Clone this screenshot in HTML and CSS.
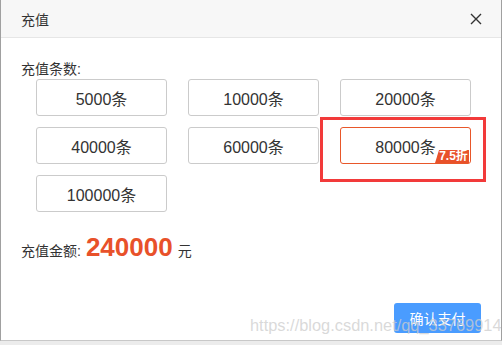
FILE: index.html
```html
<!doctype html>
<html lang="zh-cn">

<head>
    <title>充值</title>
    <meta charset="utf-8" />
    <meta name="viewport" content="width=device-width, initial-scale=1.0" />
    <link rel="stylesheet" href="styles.css">
</head>

<body>
    <div class="dialog">
        <div class="dialog-header">
            <span class="dialog-title">充值</span>
            <svg class="close" width="12" height="12" viewBox="0 0 12 12">
                <path d="M1 1L11 11M11 1L1 11" stroke="#333" stroke-width="1.4" fill="none" />
            </svg>
        </div>

        <div class="dialog-body">
            <div class="label">充值条数:</div>
            <div class="options">
                <div class="option">5000条</div>
                <div class="option">10000条</div>
                <div class="option">20000条</div>
                <div class="option">40000条</div>
                <div class="option">60000条</div>
                <div class="option active">80000条<span class="badge">7.5折</span></div>
                <div class="option">100000条</div>
            </div>

            <div class="amount">
                <span class="amount-label">充值金额:</span>
                <span class="amount-value">240000</span>
                <span class="amount-unit">元</span>
            </div>
        </div>

        <div class="dialog-footer">
            <button class="pay">确认支付</button>
        </div>

        <!-- annotation box from the screenshot -->
        <div class="mark"></div>
        <div class="watermark">https://blog.csdn.net/qq_33769914</div>
    </div>
</body>

</html>
```

FILE: styles.css
```css
body {
    margin: 0;
    background-color: #ececec;
    font-family: "Liberation Sans", "Noto Sans CJK SC", sans-serif;
    color: #333;
}

.dialog {
    position: relative;
    width: 500px;
    height: 340px;
    display: flex;
    flex-direction: column;
    background-color: #fff;
    border-left: 1px solid #a0a0a0;
    border-right: 1px solid #a0a0a0;
    border-bottom: 1px solid #c8c8c8;
    overflow: hidden;
}

.dialog-header {
    height: 37px;
    padding: 0 19px 0 20px;
    display: flex;
    align-items: center;
    justify-content: space-between;
    background-color: #f7f7f7;
    border-bottom: 1px solid #e6e6e6;
}

.dialog-title {
    font-size: 14px;
}

.close {
    display: block;
}

.dialog-body {
    padding: 21px 20px 0 20px;
}

.label {
    font-size: 14px;
    line-height: 20px;
}

.options {
    display: grid;
    grid-template-columns: repeat(3, 131px);
    grid-auto-rows: 37px;
    column-gap: 21px;
    row-gap: 11px;
    margin-left: 15px;
}

.option {
    position: relative;
    display: flex;
    align-items: center;
    justify-content: center;
    border: 1px solid #cbcbcb;
    border-radius: 3px;
    font-size: 16px;
    color: #333;
    box-sizing: border-box;
}

.option.active {
    border-color: #e8572a;
}

.badge {
    position: absolute;
    right: 1px;
    bottom: 0;
    width: 34px;
    height: 13px;
    padding-left: 3px;
    box-sizing: border-box;
    background-color: #e8512a;
    clip-path: polygon(4px 0, 100% 0, 100% 100%, 0 100%);
    color: #fff;
    font-size: 12px;
    font-weight: bold;
    line-height: 13px;
    text-align: center;
}

.amount {
    display: flex;
    align-items: baseline;
    margin-top: 20px;
    gap: 5px;
}

.amount-label,
.amount-unit {
    font-size: 14px;
}

.amount-value {
    font-size: 26px;
    font-weight: bold;
    color: #e8512a;
}

.dialog-footer {
    margin-top: auto;
    padding: 0 20px 7px 0;
    display: flex;
    justify-content: flex-end;
}

.pay {
    width: 87px;
    height: 30px;
    border: none;
    border-radius: 3px;
    background-color: #4a9cff;
    color: #fff;
    font-size: 14px;
    font-family: "Liberation Sans", "Noto Sans CJK SC", sans-serif;
    cursor: pointer;
}

.mark {
    position: absolute;
    left: 319px;
    top: 117px;
    width: 160px;
    height: 59px;
    border: 3px solid #f23a3a;
}

.watermark {
    position: absolute;
    left: 249px;
    top: 316px;
    font-size: 16.4px;
    color: rgba(205, 205, 205, 0.75);
    white-space: nowrap;
    pointer-events: none;
}
```
